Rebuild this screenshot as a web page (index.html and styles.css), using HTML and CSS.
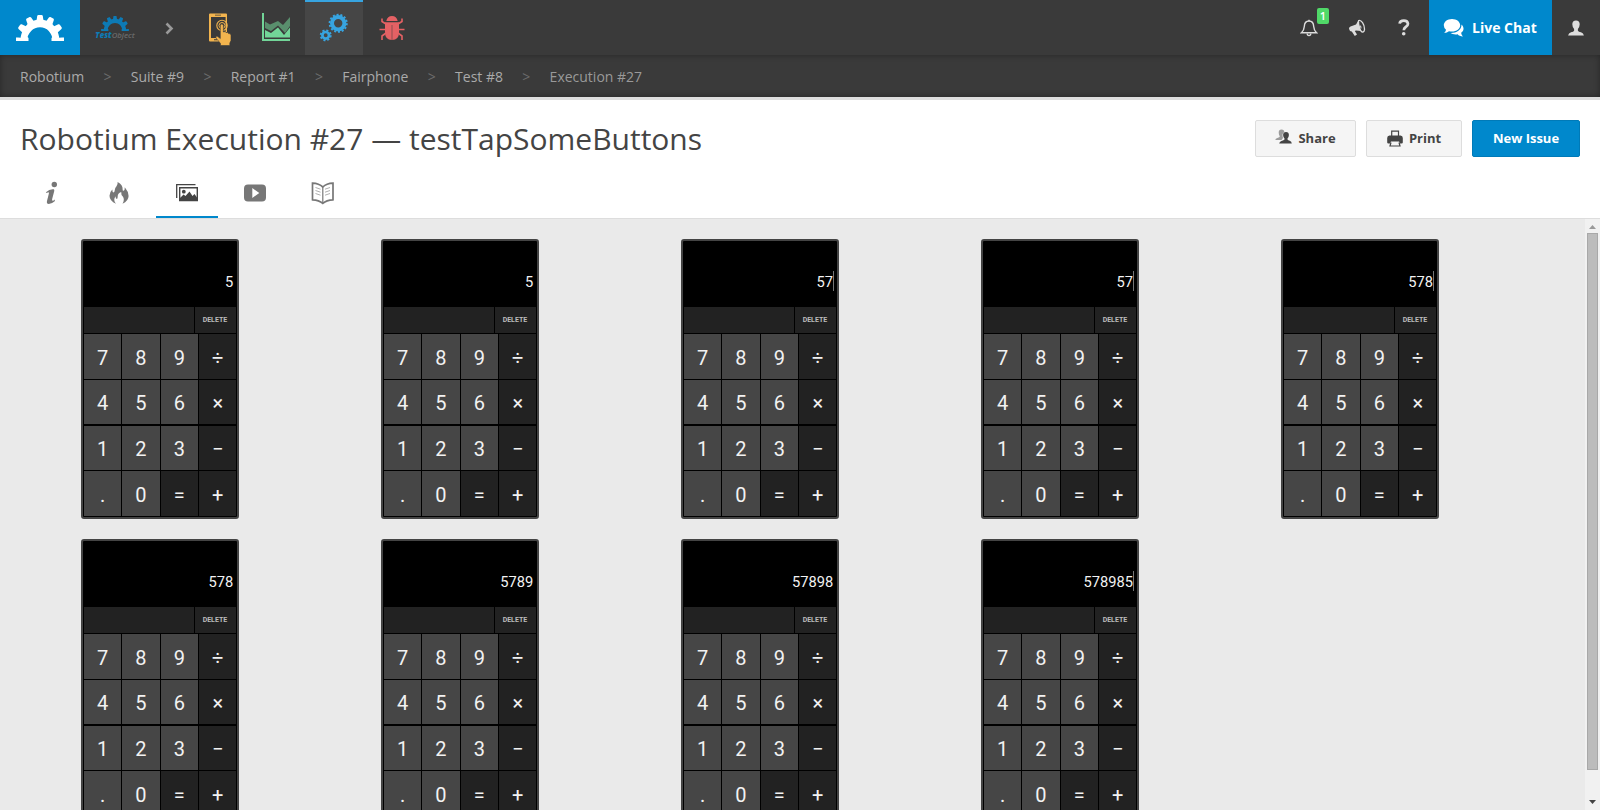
FILE: index.html
```html
<!DOCTYPE html>
<html lang="en">
<head>
<meta charset="utf-8">
<title>Robotium Execution #27</title>
<link rel="stylesheet" href="styles.css">
</head>
<body>
<svg class="defs" aria-hidden="true">
  <defs>
    <path id="tooth" d="M20.200 8 21.200 1Q21.400 0 22.400 0H25.600Q26.600 0 26.800 1L27.800 8Z"/>
    <symbol id="arch" viewBox="0 0 48 26">
      <path d="M4.500 26C4.500 14 13 4.600 24 4.600S43.500 14 43.500 26H37C36 17.500 31 12.300 24 12.300S12 17.500 10.500 26Z"/>
      <path d="M0 26V22.600Q2.500 22.200 5 22.800L10.500 21 12.500 23V26ZM48 26V22.600Q45.500 22.200 43 22.800L37.500 21 35.500 23V26Z"/>
      <use href="#tooth"/>
      <use href="#tooth" transform="rotate(-27 24 26)"/>
      <use href="#tooth" transform="rotate(27 24 26)"/>
      <use href="#tooth" transform="rotate(-56 24 25)"/>
      <use href="#tooth" transform="rotate(56 24 25)"/>
    </symbol>
  </defs>
</svg>

<header class="topbar">
  <a class="brand"><svg width="48" height="26"><use href="#arch"/></svg></a>
  <a class="project">
    <svg width="28" height="15"><use href="#arch"/></svg>
    <span class="project-name"><b>Test</b>Object</span>
  </a>
  <svg class="chevron" width="9" height="13" viewBox="0 0 9 13"><path d="M1.500 1.500 6.500 6.500 1.500 11.500" fill="none" stroke="currentColor" stroke-width="2.600"/></svg>
  <nav class="modules">
    <a class="module touch">
      <svg width="24" height="34" viewBox="0 0 24 34">
        <path fill-rule="evenodd" d="M2 1.500H18Q19 1.500 19 2.500V20H17.600V5H3V26H12V29.500H2Q1 29.500 1 28.500V2.500Q1 1.500 2 1.500ZM7 2.800V3.600H13V2.800ZM6 27.300V28.300H9V27.300Z"/>
        <circle cx="14" cy="13.500" r="5.200" fill="none" stroke="currentColor" stroke-width="1.100"/>
        <circle cx="14" cy="13.500" r="3" fill="none" stroke="currentColor" stroke-width="1"/>
        <path class="outlined" d="M12.300 13.500Q12.300 12 13.800 12T15.400 13.500V20Q17.500 18.800 18 20.600 20 19.800 20.500 21.600 23 21 23 23.500V28.500L21.800 31V33.500H12.500V31.500L8 26Q7.200 24.500 9 24L12.300 26.500Z"/>
      </svg>
    </a>
    <a class="module chart">
      <svg width="30" height="30" viewBox="0 0 30 30">
        <path d="M1 1H3V27H29V29H1Z"/>
        <path d="M4 9.500 9 12.500 17 9 22 13 29 5V14L24 21 17 13.500 10 19 4 16Z" opacity=".55"/>
        <path d="M4 18 10 21 17 15.500 23 23 29 15.500V25.500H4Z"/>
      </svg>
    </a>
    <a class="module gears is-active">
      <svg class="line" width="30" height="30" viewBox="0 0 30 30" stroke="currentColor">
        <circle cx="19.200" cy="10.300" r="6.200" stroke-width="4"/>
        <circle cx="19.200" cy="10.300" r="8.600" stroke-width="1.900" stroke-dasharray="2.070 1.790"/>
        <circle cx="6.700" cy="22.300" r="3.300" stroke-width="2.700"/>
        <circle cx="6.700" cy="22.300" r="5" stroke-width="1.900" stroke-dasharray="2.063 1.863"/>
      </svg>
    </a>
    <a class="module bug">
      <svg width="26" height="26" viewBox="0 0 26 26">
        <path d="M7.300 6Q8.500 1 13 1T18.700 6Z"/>
        <path d="M6 7.300H20V17Q20 25 13 25T6 17Z"/>
        <path d="M3 3.500V6.500L7 9M23 3.500V6.500L19 9M.5 14.500H7M25.500 14.500H19M7 18 3 21V25M19 18 23 21V25" fill="none" stroke="currentColor" stroke-width="1.600"/>
        <path class="gap-line" d="M13 10V25"/>
      </svg>
    </a>
  </nav>
  <div class="tools">
    <a class="tool bell">
      <svg width="18" height="18" viewBox="0 0 18 18"><path d="M1.500 13.700Q4 11.500 4.300 7.500 4.500 2 9 2T13.700 7.500Q14 11.500 16.500 13.700Z" fill="none" stroke="currentColor" stroke-width="1.400"/><path d="M7.200 14.500Q7.200 16.600 9 16.600T10.800 14.500" fill="none" stroke="currentColor" stroke-width="1.300"/><path d="M8.300.8h1.400v1.500H8.300z"/></svg>
      <span class="badge">1</span>
    </a>
    <a class="tool horn">
      <svg width="18" height="18" viewBox="0 0 18 18"><path d="M1 9.800Q.8 8.300 2.500 7.600L8 5.500 10.700 1 13 12 8 11.600 6.800 12 9 15.500 6.800 17 3.800 12.500Q1.600 12.700 1 9.800Z"/><path d="M10.700 1.500C13 .6 16.700 5 16.500 10.500 16.300 13 14.500 14 13 12 11 10 9.700 4 10.700 1.500Z" fill="none" stroke="currentColor" stroke-width="1.300"/><path class="horn-mouth" d="M11.600 4C13.500 4 15.200 8 14.800 11 12.800 10.500 11.300 7.500 11.600 4Z"/><path d="M11.800 6Q13.800 6.500 13.500 9.500L12.500 9.300Z"/></svg>
    </a>
    <a class="tool help">
      <svg width="12" height="17" viewBox="0 0 12 17"><path d="M1.600 4.600Q2 1.700 5.800 1.700T10 4.800Q10 6.700 7.700 8 5.800 9.200 5.800 11.300" fill="none" stroke="currentColor" stroke-width="2.700"/><circle cx="5.700" cy="14.800" r="1.800"/></svg>
    </a>
    <a class="chat">
      <svg width="21" height="20" viewBox="0 0 21 20"><path d="M9 .9C13.600.9 17.200 3.700 17.200 7.300S13.600 13.600 9 13.600Q7.400 13.600 6 13.200 4 15 1.200 15 3 13.400 3 11.800.8 9.900.8 7.300C.8 3.700 4.400.9 9 .9Z"/><path d="M18.500 6.500C21.300 9.300 21.200 12.500 18.200 14.700 18.300 16.400 19 17.300 20 18.500 17.500 18.500 15.600 17.600 14.700 16.300 11.800 16.800 9 16.200 7.500 15 13.500 15.200 18.700 11.800 18.500 6.500Z"/></svg>
      <span>Live Chat</span>
    </a>
    <a class="tool user">
      <svg width="16" height="16" viewBox="0 0 16 16"><path d="M8 .5Q11.700.5 11.700 4.300 11.600 7.500 9.900 9V10.700Q10.500 11.700 13 12.300 15.500 13 15.900 15.500H.1Q.5 13 3 12.300 5.500 11.700 6.100 10.700V9Q4.400 7.500 4.300 4.300 4.300.5 8 .5Z"/></svg>
    </a>
  </div>
</header>

<nav class="crumbs">
  <a>Robotium</a><i>&gt;</i><a>Suite #9</a><i>&gt;</i><a>Report #1</a><i>&gt;</i><a>Fairphone</a><i>&gt;</i><a>Test #8</a><i>&gt;</i><span>Execution #27</span>
</nav>

<section class="page-head">
  <div class="title-row">
    <h1>Robotium Execution #27 — testTapSomeButtons</h1>
    <div class="actions">
      <button class="btn share">
        <svg width="17" height="15" viewBox="0 0 17 15"><path opacity=".5" d="M6.500.5Q9.300.5 9.300 3.300 6.500 4.500 8 9L6.500 11H.3Q.5 9.400 2.400 8.900 4.700 8.300 4.900 7.300 3.700 6 3.700 3.500 3.700.5 6.500.5Z"/><path d="M11 3Q13.900 3 13.900 6 13.800 8.400 12.500 9.600V10.600Q13 11.400 14.700 11.800 16.600 12.300 16.800 14.500H4.200Q4.500 12.500 6.400 11.900 8.900 11.300 9.500 10.400V9.600Q8.200 8.400 8.100 6 8.100 3 11 3Z"/></svg>
        <span>Share</span>
      </button>
      <button class="btn print">
        <svg width="16" height="17" viewBox="0 0 16 17"><path d="M4.700 6V1.200H11.500V6" fill="none" stroke="currentColor" stroke-width="1.200"/><path d="M2.500 5.500H13.500Q15.800 5.500 15.800 8V12.500Q15.800 13.500 14.500 13.500H13L12 11.500H4L3 13.500H1.500Q.2 13.500.2 12.500V8Q.2 5.500 2.500 5.500Z"/><path d="M4 12.500 3 16H13L12 12.500" fill="none" stroke="currentColor" stroke-width="1.200"/></svg>
        <span>Print</span>
      </button>
      <button class="btn primary">New Issue</button>
    </div>
  </div>
  <nav class="tabs">
    <a class="tab"><svg width="24" height="24" viewBox="0 0 24 24"><circle cx="15.300" cy="3.500" r="2.700"/><path d="M7.300 11Q10.500 7.800 14.800 8.300 15.600 8.700 15.200 10.300L13.100 18.300Q12.800 20.300 14.500 19.500L16 18.600 15.700 20.200Q12.500 23 9.800 23 7.300 22.800 8 19.900L9.900 12.600Q10.200 11.100 9 11.400L6.900 12Z"/></svg></a>
    <a class="tab"><svg width="24" height="24" viewBox="0 0 24 24"><path d="M10.600 1Q16 4 15.600 8.300 15.500 10 16.500 9.800 18 9 17.800 6.200 21.500 10.500 21.600 15 21.500 20 15.500 22.800 18 18.500 15.800 15.500 14 14 14.200 11 10.600 12 10.700 15.500 10.700 17.500 9.900 18 8.500 17.600 8.500 15.200 5.800 19 9 22.700 2.500 20 2.500 14.800 2.600 11 5.300 8.500 5.300 11 6.500 11.500 7.700 11.200 7.700 9.500 7.300 7.500 9.500 5.200 11 3.500 10.600 1Z"/></svg></a>
    <a class="tab is-active"><svg width="24" height="24" viewBox="0 0 24 24"><path d="M1.700 17V3.700H20.500" fill="none" stroke="currentColor" stroke-width="1.300"/><path d="M4.700 6.700H22.300V19.500H4.700Z" fill="none" stroke="currentColor" stroke-width="1.400"/><circle cx="8.800" cy="10.700" r="1.900"/><path d="M5 19V17L8.500 13.500 10.500 15 14.500 10.500 17.500 15 19.500 13 22 16.500V19Z"/></svg></a>
    <a class="tab"><svg width="24" height="24" viewBox="0 0 24 24"><path fill-rule="evenodd" d="M5 3.500H19Q23 3.500 23 7.500V16.500Q23 20.500 19 20.500H5Q1 20.500 1 16.500V7.500Q1 3.500 5 3.500ZM9.300 7V17L16.300 12Z"/></svg></a>
    <a class="tab"><svg class="line" width="24" height="24" viewBox="0 0 24 24" stroke="currentColor"><path d="M1.500 2.200Q8 2.500 11.800 6 15.500 2.500 22 2.200V18.800Q15.500 19 11.800 22.300 8 19 1.500 18.800Z" stroke-width="1.700"/><path d="M11.800 6V22" stroke-width="1.200"/><path d="M4.500 6.500 9.500 8.200M4.500 9.500 9.500 11.200M4.500 12.500 9.500 14.200M19 6.500 14 8.200M19 9.500 14 11.200M19 12.500 14 14.200" stroke-width=".8" opacity=".75"/></svg></a>
  </nav>
</section>

<main class="viewport">
  <div class="gallery" id="gallery"></div>
  <div class="scrollbar">
    <svg width="15" height="14" viewBox="0 0 15 14"><path d="M4 10 7.500 6 11 10Z" fill="#999"/></svg>
    <div class="thumb"></div>
    <svg width="15" height="14" viewBox="0 0 15 14"><path d="M4 5 7.500 9 11 5Z" fill="#444"/></svg>
  </div>
</main>
<script src="script.js"></script>
</body>
</html>
```

FILE: styles.css
```css
* { box-sizing: border-box; }
body {
  margin: 0;
  width: 1600px;
  height: 810px;
  overflow: hidden;
  display: flex;
  flex-direction: column;
  font-family: "Open Sans", sans-serif;
  color: #444;
  background: #fff;
}
svg { display: block; fill: currentColor; flex: none; }
svg.line { fill: none; }
.defs { position: absolute; width: 0; height: 0; }

.topbar { height: 55px; flex: none; display: flex; align-items: center; background: #3a3a3a; }
.brand { width: 80px; height: 55px; padding: 15px 16px 0; background: #08c; color: #fff; }
.project { width: 70px; height: 55px; padding-top: 16px; display: flex; flex-direction: column; align-items: center; color: #0d7ab5; }
.project-name { font: italic 600 7.800px/9px "Open Sans", sans-serif; color: #6a6a6a; white-space: nowrap; }
.project-name b { color: #0d7ab5; }
.chevron { margin-left: 15px; margin-top: 1px; color: #999; }
.modules { display: flex; margin-left: 15px; }
.module { width: 58px; height: 55px; display: flex; justify-content: center; padding-top: 12px; }
.touch { color: #f2b44e; padding: 12px 0 0 3px; }
.chart { color: #72d598; padding: 12px 0 0; }
.gears { color: #37a4e0; background: #464646; border-top: 2px solid #37a4e0; padding-top: 11px; }
.bug { color: #e46164; padding-top: 15px; }
.outlined { stroke: #3a3a3a; stroke-width: .6; }
.gap-line { fill: none; stroke: #3a3a3a; stroke-width: .5; }
.tools { display: flex; align-items: center; margin-left: auto; color: #ddd; }
.tool { display: flex; justify-content: center; width: 48px; }
.bell { position: relative; }
.badge {
  position: absolute; left: 32px; top: -11px; width: 12px; height: 16px;
  border-radius: 2px; background: #50d968; color: #fff;
  font-size: 11px; line-height: 16px; font-weight: 600; text-align: center;
}
.horn-mouth { fill: #3a3a3a; }
.help { width: 48px; padding-right: 2px; }
.chat {
  width: 123px; height: 55px; display: flex; align-items: center; gap: 8px;
  padding-left: 14px; background: #08c; color: #fff; font-size: 14px; font-weight: 700;
}
.chat span { padding-bottom: 1px; }

.crumbs {
  height: 45px; flex: none; display: flex; align-items: center; gap: 19.300px;
  padding: 0 20px; background: #3a3a3a; border-bottom: 3px solid #ddd;
  box-shadow: inset 0 0 6px rgba(0, 0, 0, .35);
  font-size: 14px; color: #aaa;
}
.crumbs i { font-style: normal; color: #6c6c6c; }
.crumbs span { color: #999; }

.page-head { height: 119px; flex: none; padding: 0 20px; border-bottom: 1px solid #ddd; }
.title-row { height: 78px; display: flex; justify-content: space-between; }
h1 { margin: 18px 0 0; font-size: 30px; line-height: 41px; font-weight: 400; }
.actions { display: flex; gap: 10px; padding-top: 20px; }
.btn {
  height: 37px; display: flex; align-items: center; justify-content: center;
  border: 1px solid #ddd; border-radius: 2px; background: #f5f5f5; color: #444;
  font: 700 13px "Open Sans", sans-serif; padding: 0 0 2px;
}
.share { width: 101px; gap: 6px; }
.share svg { margin-top: -2px; }
.print { width: 96px; gap: 6px; }
.print svg { margin-top: 2px; }
.primary { width: 108px; background: #08c; border-color: #007ab8; color: #fff; }
.tabs { display: flex; gap: 6px; }
.tab { width: 62px; height: 40px; display: flex; justify-content: center; padding-top: 3px; color: #777; }
.tab.is-active { color: #444; border-bottom: 2px solid #08c; }

.viewport { flex: 1; min-height: 0; display: flex; background: #eaeaea; overflow: hidden; }
.gallery { flex: 1; display: grid; grid-template-columns: repeat(5, 300px); grid-auto-rows: 300px; padding: 20px 0 0 10px; }
.scrollbar { width: 15px; height: 591px; background: #f1f1f1; display: flex; flex-direction: column; }
.thumb { flex: none; width: 11px; height: 537px; margin: 0 2px 25px; background: #bcbcbc; border: 1px solid #a8a8a8; }

.shot {
  justify-self: center;
  width: 158px; height: 280px; border: 2px solid #444; border-radius: 3px;
  background: #000; color: #f2f2f2; font-family: Roboto, sans-serif;
  padding: 0 .7px 0 1px; overflow: hidden;
}
.display { height: 66px; padding: 30px 2.300px 0; display: flex; justify-content: flex-end; font-size: 14.700px; line-height: 22px; }
.display span { padding: 0 .7px; }
.display.caret span { border-right: 1px solid #777; padding: 0; height: 20px; line-height: 22px; }
.strip { display: grid; grid-template-columns: 109.500px 1fr; gap: 1.500px; height: 26px; }
.strip > * { background: #222; }
.delete { display: flex; align-items: center; justify-content: center; color: #bbb; font-size: 7px; font-weight: 700; padding: 0 1.500px 1px 0; }
.keys { display: grid; grid-template-columns: repeat(4, 1fr); grid-auto-rows: 44.400px; gap: 1.300px; margin-top: 1.300px; }
.key { display: flex; align-items: center; justify-content: center; background: #464646; font-size: 20px; padding-top: 2.200px; }
.key.op { background: #222; }
```

FILE: script.js
```js
const shots = [
  ["5", false], ["5", false], ["57", true], ["57", true], ["578", true],
  ["578", false], ["5789", false], ["57898", false], ["578985", true]
];
const keys = ["7", "8", "9", "÷", "4", "5", "6", "×", "1", "2", "3", "−", ".", "0", "=", "+"];

const keypad = keys
  .map(k => `<div class="key${"÷×−=+".includes(k) ? " op" : ""}">${k}</div>`)
  .join("");

document.getElementById("gallery").innerHTML = shots
  .map(([value, caret]) => `
    <div class="shot">
      <div class="display${caret ? " caret" : ""}"><span>${value}</span></div>
      <div class="strip"><div></div><div class="delete">DELETE</div></div>
      <div class="keys">${keypad}</div>
    </div>`)
  .join("");
```
